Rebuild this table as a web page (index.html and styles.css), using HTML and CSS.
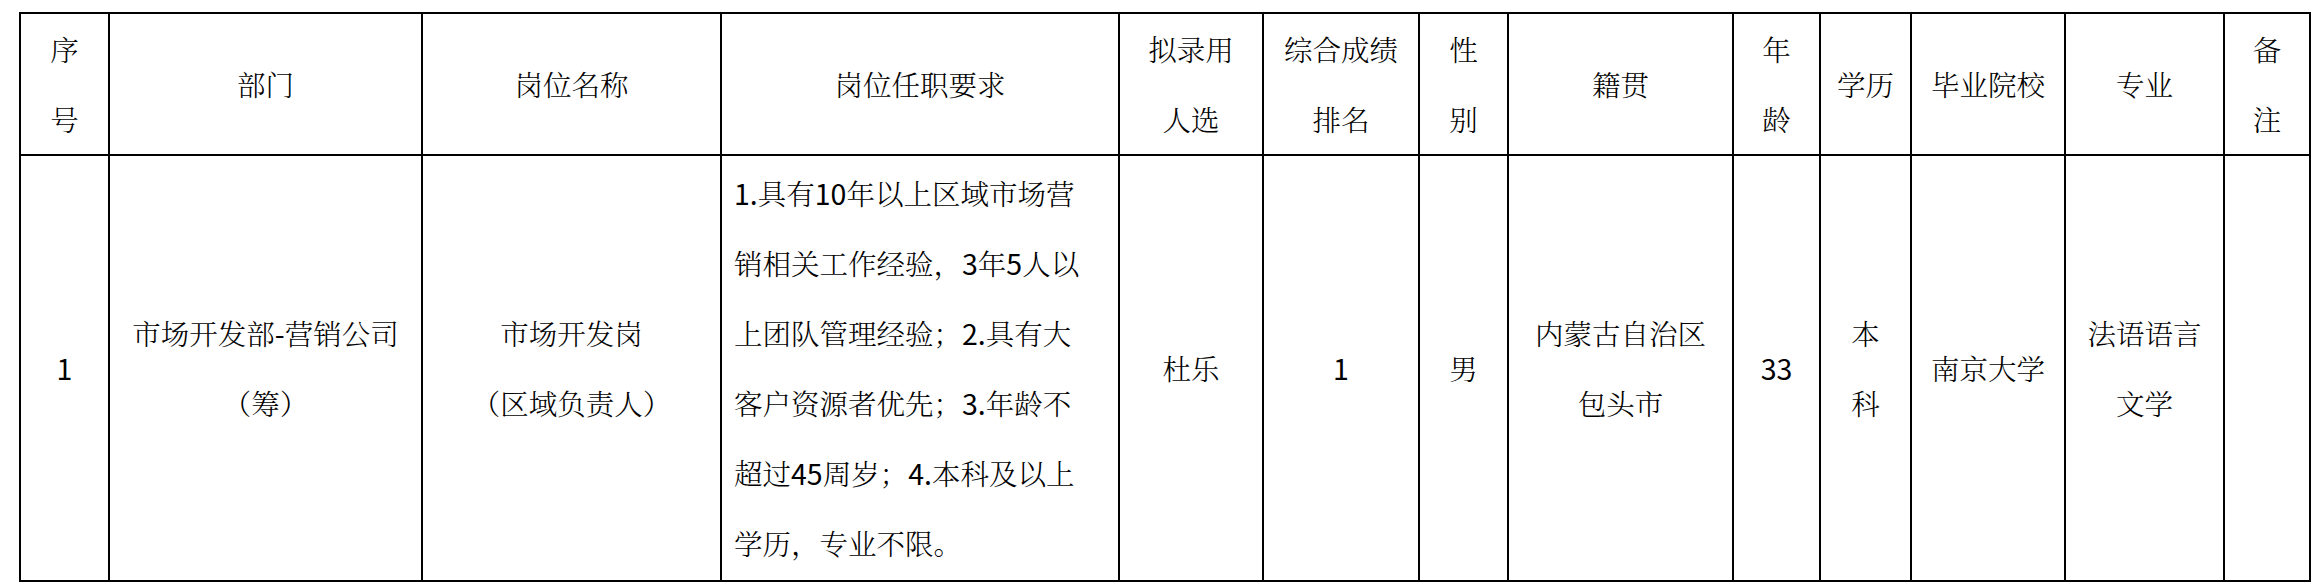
FILE: index.html
```html
<!DOCTYPE html>
<html lang="zh-CN">
<head>
<meta charset="utf-8">
<title>拟录用人选公示</title>
<link rel="stylesheet" href="styles.css">
</head>
<body>
<div class="page">
  <table class="roster">
    <colgroup>
      <col class="c-no">
      <col class="c-dept">
      <col class="c-post">
      <col class="c-req">
      <col class="c-name">
      <col class="c-rank">
      <col class="c-sex">
      <col class="c-origin">
      <col class="c-age">
      <col class="c-edu">
      <col class="c-school">
      <col class="c-major">
      <col class="c-note">
    </colgroup>
    <thead>
      <tr class="head-row">
        <th>序<br>号</th>
        <th>部门</th>
        <th>岗位名称</th>
        <th>岗位任职要求</th>
        <th>拟录用<br>人选</th>
        <th>综合成绩<br>排名</th>
        <th>性<br>别</th>
        <th>籍贯</th>
        <th>年<br>龄</th>
        <th>学历</th>
        <th>毕业院校</th>
        <th>专业</th>
        <th>备<br>注</th>
      </tr>
    </thead>
    <tbody>
      <tr class="data-row">
        <td><span class="num">1</span></td>
        <td>市场开发部<span class="num">-</span>营销公司<br>（筹）</td>
        <td>市场开发岗<br>（区域负责人）</td>
        <td class="req"><span class="num">1.</span>具有<span class="num">10</span>年以上区域市场营<br>销相关工作经验，<span class="num">3</span>年<span class="num">5</span>人以<br>上团队管理经验；<span class="num">2.</span>具有大<br>客户资源者优先；<span class="num">3.</span>年龄不<br>超过<span class="num">45</span>周岁；<span class="num">4.</span>本科及以上<br>学历，专业不限。</td>
        <td>杜乐</td>
        <td><span class="num">1</span></td>
        <td>男</td>
        <td>内蒙古自治区<br>包头市</td>
        <td><span class="num">33</span></td>
        <td>本<br>科</td>
        <td>南京大学</td>
        <td>法语语言<br>文学</td>
        <td></td>
      </tr>
    </tbody>
  </table>
</div>
</body>
</html>
```
FILE: styles.css
```css
html, body {
  margin: 0;
  padding: 0;
  background: #ffffff;
}

.page {
  padding: 12px 0 0 19px;
}

.roster {
  border-collapse: collapse;
  table-layout: fixed;
  width: 2292px;
  font-family: "Noto Serif CJK SC", "Noto Sans CJK SC", "Noto Sans", sans-serif;
  font-size: 28.5px;
  line-height: 70px;
  color: #000000;
  font-weight: 300;
}

.roster th,
.roster td {
  border: 2px solid #000000;
  padding: 0;
  text-align: center;
  vertical-align: middle;
  font-weight: 300;
}

.head-row {
  height: 142px;
}

.data-row {
  height: 426px;
}

.roster td.req {
  text-align: left;
  padding-left: 12px;
  white-space: nowrap;
}

.num {
  font-family: "Noto Sans CJK SC", "Noto Sans", sans-serif;
  font-weight: 400;
}

.c-no { width: 89px; }
.c-dept { width: 313px; }
.c-post { width: 299px; }
.c-req { width: 398px; }
.c-name { width: 144px; }
.c-rank { width: 156px; }
.c-sex { width: 89px; }
.c-origin { width: 225px; }
.c-age { width: 87px; }
.c-edu { width: 91px; }
.c-school { width: 154px; }
.c-major { width: 159px; }
.c-note { width: 86px; }
```
